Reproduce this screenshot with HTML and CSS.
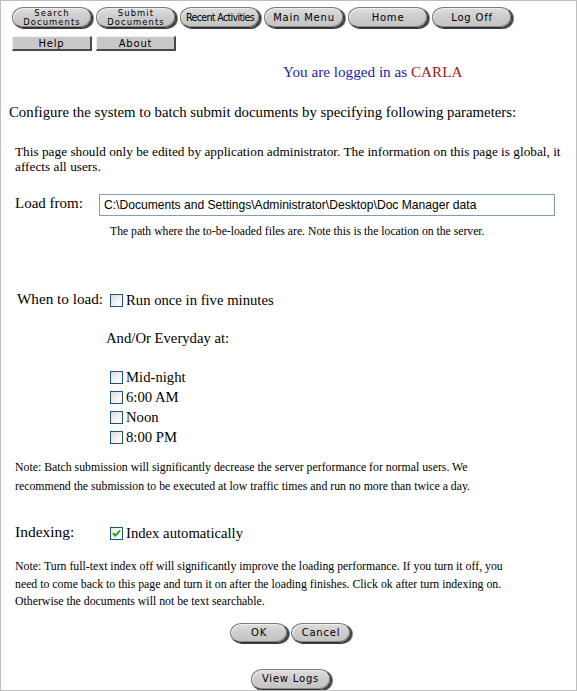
FILE: index.html
```html
<!DOCTYPE html>
<html>
<head>
<meta charset="utf-8">
<link rel="stylesheet" href="styles.css">
</head>
<body>
<div class="frame">
  <nav class="nav">
    <div class="row pills">
      <a class="pill two"><span>Search</span><span>Documents</span></a>
      <a class="pill two"><span>Submit</span><span>Documents</span></a>
      <a class="pill tight">Recent Activities</a>
      <a class="pill">Main Menu</a>
      <a class="pill">Home</a>
      <a class="pill">Log Off</a>
    </div>
    <div class="row flats">
      <a class="flat">Help</a>
      <a class="flat">About</a>
    </div>
  </nav>

  <p class="login">You are logged in as <span class="user">CARLA</span></p>

  <h1 class="title">Configure the system to batch submit documents by specifying following parameters:</h1>

  <p class="note first">This page should only be edited by application administrator. The information on this page is global, it affects all users.</p>

  <div class="field load">
    <div class="label">Load from:</div>
    <div class="value">
      <div class="input">C:\Documents and Settings\Administrator\Desktop\Doc Manager data</div>
      <p class="hint">The path where the to-be-loaded files are. Note this is the location on the server.</p>
    </div>
  </div>

  <div class="field when">
    <div class="label">When to load:</div>
    <div class="value">
      <label class="check"><span class="box"></span>Run once in five minutes</label>
      <div class="sub">And/Or Everyday at:</div>
      <div class="times">
        <label class="check"><span class="box"></span>Mid-night</label>
        <label class="check"><span class="box"></span>6:00 AM</label>
        <label class="check"><span class="box"></span>Noon</label>
        <label class="check"><span class="box"></span>8:00 PM</label>
      </div>
    </div>
  </div>

  <p class="note batch">Note: Batch submission will significantly decrease the server performance for normal users. We recommend the submission to be executed at low traffic times and run no more than twice a day.</p>

  <div class="field idx">
    <div class="label">Indexing:</div>
    <div class="value">
      <label class="check"><span class="box on"><svg width="11" height="11" viewBox="0 0 11 11"><path d="M2 5.2 L4.3 7.6 L9 2.6" fill="none" stroke="#21a121" stroke-width="2"/></svg></span>Index automatically</label>
    </div>
  </div>

  <p class="note idxnote">Note: Turn full-text index off will significantly improve the loading performance. If you turn it off, you need to come back to this page and turn it on after the loading finishes. Click ok after turn indexing on. Otherwise the documents will not be text searchable.</p>

  <div class="actions">
    <a class="pill small">OK</a>
    <a class="pill small wide">Cancel</a>
  </div>
  <div class="actions logs">
    <a class="pill">View Logs</a>
  </div>
</div>
</body>
</html>
```

FILE: styles.css
```css
html, body {
  margin: 0;
  padding: 0;
  background: #fff;
}
body {
  font-family: "Liberation Serif", "Times New Roman", serif;
  color: #000;
}
.frame {
  width: 575px;
  height: 689px;
  border: 1px solid #bdbdbd;
  overflow: hidden;
}
.nav {
  padding: 6px 0 0 11px;
}
.row {
  display: flex;
  gap: 4px;
}
.pill {
  box-sizing: border-box;
  flex: none;
  width: 80px;
  height: 21px;
  border-radius: 11px / 10px;
  background: linear-gradient(#dedede, #cdcdcd 45%, #c3c3c3);
  box-shadow: inset 1px 1px 0 #eeeeee, inset -1px -1px 0 #8a8a8a, 1px 1px 0 #3c3c3c, 2px 1px 0 #8c8c8c;
  border: 1px solid #7a7a7a;
  border-right-color: #303030;
  border-bottom-color: #303030;
  display: flex;
  align-items: center;
  justify-content: center;
  text-align: center;
  font-family: "DejaVu Sans", Verdana, sans-serif;
  font-size: 10px;
  letter-spacing: 0.8px;
  color: #000;
  line-height: 10px;
  text-decoration: none;
  white-space: nowrap;
}
.pill.tight {
  letter-spacing: -0.7px;
  font-size: 9.6px;
}
.pill.two {
  flex-direction: column;
  font-size: 8.4px;
  letter-spacing: 1.1px;
  padding-top: 0;
}
.pill.two span {
  display: block;
  height: 8.5px;
  line-height: 8.5px;
}
.flats {
  margin-top: 8px;
}
.flat {
  box-sizing: border-box;
  width: 80px;
  height: 15px;
  background: #c8c8c8;
  border-top: 1px solid #f0f0f0;
  border-left: 1px solid #f0f0f0;
  border-right: 2px solid #4a4a4a;
  border-bottom: 2px solid #4a4a4a;
  display: flex;
  align-items: center;
  justify-content: center;
  font-family: "DejaVu Sans", Verdana, sans-serif;
  font-size: 10px;
  letter-spacing: 0.8px;
  color: #000;
}
.login {
  margin: 12px 0 0 282px;
  font-size: 15.2px;
  color: #1b1bb3;
  line-height: 18px;
}
.user {
  color: #a31515;
}
.title {
  margin: 22px 0 0 8px;
  font-size: 14.8px;
  font-weight: normal;
  line-height: 18px;
}
.note {
  font-size: 11.8px;
  line-height: 19px;
  margin: 0 0 0 14px;
  width: 505px;
}
.note.first {
  margin-top: 23px;
  font-size: 13.3px;
  line-height: 15px;
  width: 555px;
}
.field {
  display: flex;
  font-size: 14.7px;
  line-height: 18px;
}
.field .label {
  flex: none;
  padding-left: 14px;
  white-space: nowrap;
}
.load {
  margin-top: 20px;
}
.load .label {
  width: 84px;
  font-size: 15px;
}
.input {
  box-sizing: border-box;
  width: 456px;
  height: 22px;
  border: 1px solid #7f9db9;
  font-family: "Liberation Sans", Arial, sans-serif;
  font-size: 12.1px;
  line-height: 20px;
  padding-left: 4px;
  white-space: nowrap;
}
.hint {
  margin: 8px 0 0 11px;
  font-size: 11.7px;
  line-height: 15px;
  white-space: nowrap;
}
.when {
  margin-top: 51px;
}
.when .label {
  width: 93px;
  padding-left: 16px;
  font-size: 15.2px;
}
.check {
  display: flex;
  align-items: center;
  height: 20px;
  white-space: nowrap;
}
.box {
  box-sizing: border-box;
  flex: none;
  width: 13px;
  height: 13px;
  border: 1px solid #1c5180;
  background: linear-gradient(135deg, #dcdcd7, #f8f8f6 70%, #fff);
  margin-right: 3px;
  display: flex;
  align-items: center;
  justify-content: center;
}
.box.on {
  background: linear-gradient(135deg, #e8e8e4, #fff);
}
.sub {
  margin: 19px 0 0 -4px;
  height: 18px;
}
.times {
  margin-top: 20px;
}
.batch {
  margin-top: 11px;
}
.idx {
  margin-top: 27px;
}
.idx .label {
  width: 95px;
  font-size: 15.5px;
}
.idxnote {
  margin-top: 15px;
  line-height: 17.5px;
}
.actions {
  display: flex;
  justify-content: center;
  gap: 3px;
  margin-top: 12px;
  padding-left: 4px;
}
.pill.small {
  width: 58px;
  height: 20px;
}
.pill.wide {
  width: 60px;
}
.logs {
  margin-top: 26px;
  padding-left: 4px;
}
```
